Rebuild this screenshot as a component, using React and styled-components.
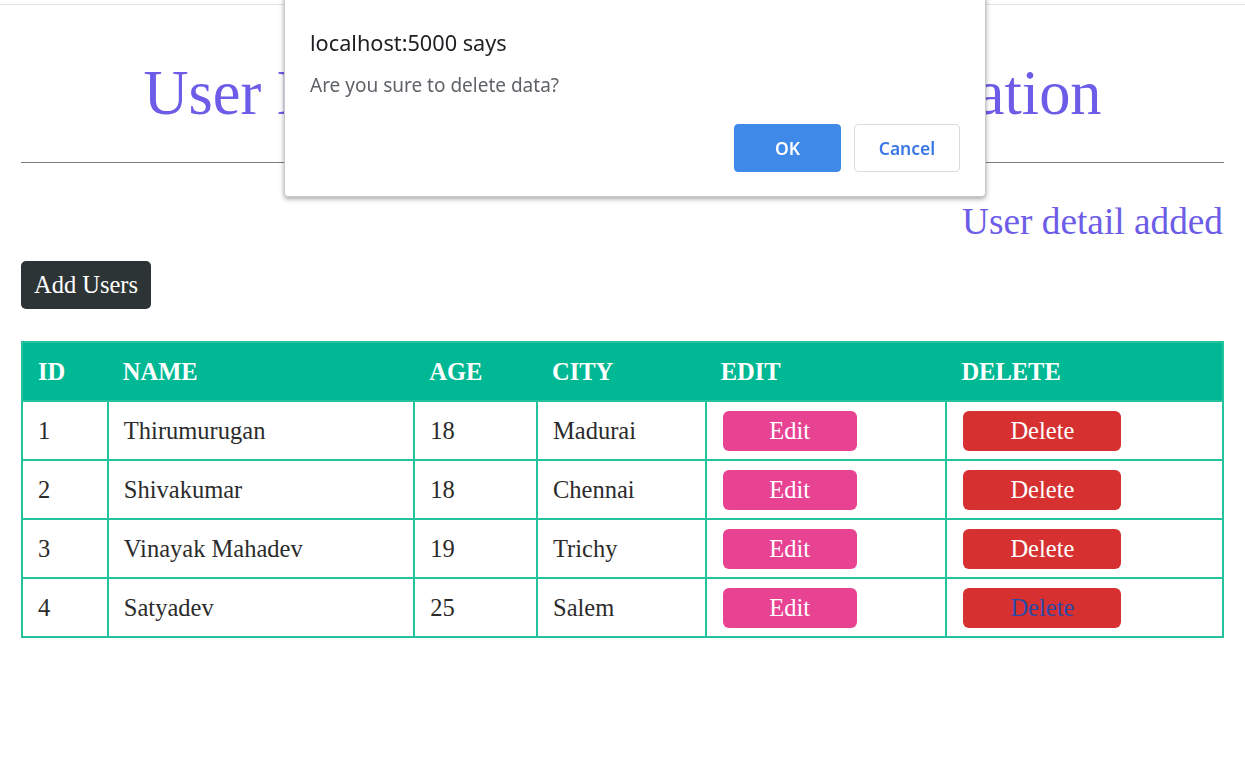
import React from "react";
import styled, { createGlobalStyle } from "styled-components";

const GlobalStyle = createGlobalStyle`
  html, body {
    margin: 0;
    padding: 0;
    background: #fff;
  }
  body {
    font-family: "Liberation Serif", "Times New Roman", serif;
    border-top: 1px solid #e3e3e3;
    margin-top: 4px;
  }
`;

const users = [
  { id: 1, name: "Thirumurugan", age: 18, city: "Madurai" },
  { id: 2, name: "Shivakumar", age: 18, city: "Chennai" },
  { id: 3, name: "Vinayak Mahadev", age: 19, city: "Trichy" },
  { id: 4, name: "Satyadev", age: 25, city: "Salem" },
];

const Page = styled.div`
  padding: 0 21px 0 21px;
  width: 1203px;
`;

const Title = styled.h1`
  margin: 0;
  padding-top: 54px;
  font-size: 62.4px;
  font-weight: normal;
  color: #6c5ce7;
  text-align: center;
  line-height: 68px;
  white-space: nowrap;
`;

const Rule = styled.hr`
  margin: 35px 0 0;
  border: 0;
  border-top: 1px solid #7a7a7a;
`;

const Notice = styled.div`
  margin-top: 39px;
  text-align: right;
  font-size: 37.3px;
  color: #6c5ce7;
  line-height: 40px;
  padding-right: 1px;
`;

const AddButton = styled.button`
  margin-top: 19px;
  width: 130px;
  height: 48px;
  background: #2d3436;
  color: #fff;
  border: 0;
  border-radius: 5px;
  font-family: "Liberation Serif", "Times New Roman", serif;
  font-size: 24.5px;
  padding: 0;
  cursor: pointer;
`;

const Table = styled.table`
  margin-top: 32px;
  width: 1203px;
  border-collapse: collapse;
  border: 2px solid #22c39d;
  font-size: 24.5px;
  color: #2b2b2b;
`;

const Head = styled.th`
  background: #00b894;
  color: #fff;
  font-weight: bold;
  text-align: left;
  height: 59px;
  padding: 0 15px;
  width: ${(p) => p.$w}px;
  box-sizing: border-box;
`;

const Cell = styled.td`
  border: 2px solid #22c39d;
  height: 57px;
  padding: 0 15px;
  vertical-align: middle;
`;

const ActionButton = styled.button`
  display: block;
  width: ${(p) => p.$w}px;
  height: 40px;
  margin-left: 1px;
  border: 0;
  border-radius: 6px;
  background: ${(p) => p.$bg};
  color: ${(p) => p.$fg || "#fff"};
  font-family: "Liberation Serif", "Times New Roman", serif;
  font-size: 24.5px;
  padding: 0;
  cursor: pointer;
`;

const Dialog = styled.div`
  position: fixed;
  top: -4px;
  left: 284px;
  width: 702px;
  height: 201px;
  box-sizing: border-box;
  background: #fff;
  border: 1px solid #c9c9c9;
  border-top: 0;
  border-radius: 0 0 4px 4px;
  box-shadow: 0 2px 5px rgba(0, 0, 0, 0.35);
  padding: 32px 25px 0 25px;
  font-family: "Noto Sans", "Open Sans", sans-serif;
`;

const DialogTitle = styled.div`
  font-size: 21.7px;
  color: #202124;
  line-height: 30px;
`;

const DialogText = styled.div`
  margin-top: 14px;
  font-size: 19px;
  color: #5f6368;
  line-height: 26px;
`;

const DialogActions = styled.div`
  display: flex;
  justify-content: flex-end;
  gap: 13px;
  margin-top: 26px;
`;

const DialogButton = styled.button`
  width: ${(p) => p.$w}px;
  height: 48px;
  border-radius: 4px;
  font-family: "Noto Sans", "Open Sans", sans-serif;
  font-size: 17.5px;
  font-weight: 600;
  cursor: pointer;
  background: ${(p) => (p.$primary ? "#3f89e8" : "#fff")};
  color: ${(p) => (p.$primary ? "#fff" : "#3b78e7")};
  border: 1px solid ${(p) => (p.$primary ? "#3f89e8" : "#dadce0")};
`;

const widths = [86, 307, 123, 169, 241, 277];

export default function App() {
  return (
    <>
      <GlobalStyle />
      <Page>
        <Title>User Details Management Application</Title>
        <Rule />
        <Notice>User detail added</Notice>
        <AddButton>Add Users</AddButton>
        <Table>
          <thead>
            <tr>
              {["ID", "NAME", "AGE", "CITY", "EDIT", "DELETE"].map((h, i) => (
                <Head key={h} $w={widths[i]}>
                  {h}
                </Head>
              ))}
            </tr>
          </thead>
          <tbody>
            {users.map((u, i) => (
              <tr key={u.id}>
                <Cell>{u.id}</Cell>
                <Cell>{u.name}</Cell>
                <Cell>{u.age}</Cell>
                <Cell>{u.city}</Cell>
                <Cell>
                  <ActionButton $w={134} $bg="#e84393">
                    Edit
                  </ActionButton>
                </Cell>
                <Cell>
                  <ActionButton
                    $w={158}
                    $bg="#d63031"
                    $fg={i === users.length - 1 ? "#2b4aa8" : "#fff"}
                  >
                    Delete
                  </ActionButton>
                </Cell>
              </tr>
            ))}
          </tbody>
        </Table>
      </Page>
      <Dialog>
        <DialogTitle>localhost:5000 says</DialogTitle>
        <DialogText>Are you sure to delete data?</DialogText>
        <DialogActions>
          <DialogButton $primary $w={107}>
            OK
          </DialogButton>
          <DialogButton $w={106}>Cancel</DialogButton>
        </DialogActions>
      </Dialog>
    </>
  );
}
